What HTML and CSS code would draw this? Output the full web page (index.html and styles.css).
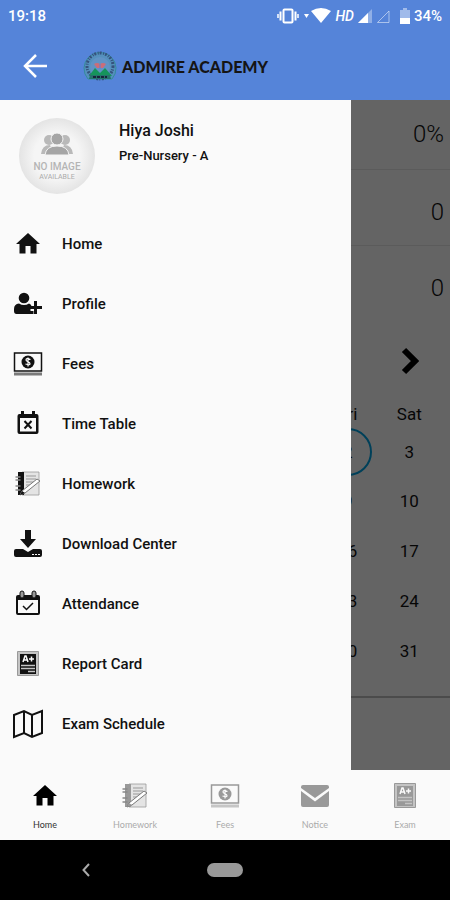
FILE: index.html
```
<!DOCTYPE html>
<html lang="en">
  <head>
    <meta charset="utf-8" />
    <meta name="viewport" content="width=device-width, initial-scale=1" />
    <title>Admire Academy</title>
    <link rel="stylesheet" href="styles.css">
  </head>
  <body>
    <!-- shared icons -->
    <svg class="sprite" aria-hidden="true">
      <symbol id="icon-home" viewBox="0 0 30 30">
        <path d="M15 4l12 11h-3.500v9.500h-6V17h-5v7.500h-6V15H3z" />
      </symbol>
      <symbol id="icon-profile" viewBox="0 0 30 30">
        <circle cx="11" cy="9" r="5.300" />
        <path d="M6 14.500q5 3 10 0 2 .5 2.500 2.500h-1v5h3v3H3.500Q1 25 1 22v-2q0-5 5-5.500z" />
        <path d="M21 12h3v5h5v3h-5v5h-3v-5h-5v-3h5z" />
      </symbol>
      <symbol id="icon-fees" viewBox="0 0 30 30">
        <path d="M1.500 4h27v18h-27z" fill="none" stroke="currentColor" stroke-width="1.500" />
        <circle cx="15" cy="13" r="6.500" />
        <path d="M17.500 10.500q-4.500-2-4.500.5 0 1 2 1.700t2 2q0 2-4.500.3M15 8.500v9" fill="none" stroke="#fafafa" stroke-width="1.200" />
        <path d="M1 23.500h28v3H1z" opacity=".55" />
      </symbol>
      <symbol id="icon-timetable" viewBox="0 0 30 30">
        <path d="M6.500 5H8V2h3v3h8V2h3v3h1.500q2 0 2 2v16q0 2-2 2h-17q-2 0-2-2V7q0-2 2-2zM7 9v13.500h16V9z" fill-rule="evenodd" />
        <path d="M11.500 12l7 7.500M18.500 12l-7 7.500" fill="none" stroke="currentColor" stroke-width="2" />
      </symbol>
      <symbol id="icon-homework" viewBox="0 0 30 30">
        <path d="M9 3h17v23H9z" fill="#e4e4e4" stroke="#999" stroke-width=".8" />
        <path d="M5 3h6v23H5z" />
        <path d="M2.500 8h5M2.500 11h5M2.500 17h5M2.500 21h5" stroke="#888" stroke-width="1.500" />
        <path d="M13 7h10M13 10h10M13 13h8M13 16h4" stroke="#999" />
        <path d="M9 22L24 10l3 2-15 12-5 2z" fill="#fff" stroke="#777" stroke-width="1" />
        <path d="M7 26l2-4 3 2z" />
      </symbol>
      <symbol id="icon-download" viewBox="0 0 30 30">
        <path d="M12 1h6v9h5l-8 9-8-9h5z" />
        <path d="M3 20h7l5 3 5-3h7q2 0 2 2v4q0 2-2 2H3q-2 0-2-2v-4q0-2 2-2z" />
        <path d="M19 25.500h2M22 25.500h2M25 25.500h2" stroke="#fafafa" />
      </symbol>
      <symbol id="icon-attendance" viewBox="0 0 30 30">
        <path d="M5 6h20q2 0 2 2v16q0 2-2 2H5q-2 0-2-2V8q0-2 2-2zm0 5v13h20V11z" fill-rule="evenodd" />
        <path d="M7 4q0-2 2-2t2 2v3q0 2-2 2t-2-2zM19 4q0-2 2-2t2 2v3q0 2-2 2t-2-2z" fill="#999" stroke="currentColor" />
        <path d="M10 17l3.500 3.500L20 14" fill="none" stroke="currentColor" stroke-width="1.500" />
      </symbol>
      <symbol id="icon-report" viewBox="0 0 30 30">
        <path d="M4.500 2.500h21v24h-21z" fill="#c4c4c4" stroke="#999" />
        <path d="M7 5h16v20H7z" />
        <path d="M10 13l2-6h1l2 6M11 11h3M16 10h5M18.500 7.500v5" fill="none" stroke="#fafafa" stroke-width="1.500" />
        <path d="M8 16.500h14M8 19.500h14M15 22.500h7" stroke="#c4c4c4" stroke-width="1.500" />
      </symbol>
      <symbol id="icon-map" viewBox="0 0 30 30">
        <path d="M1 6l10-4 8 4 10-4v22l-10 4-8-4-10 4zM11 2v22M19 6v22" fill="none" stroke="currentColor" stroke-width="2" />
      </symbol>
      <symbol id="icon-mail" viewBox="0 0 30 30">
        <path d="M3 4h24q2 0 2 2v1L15 17 1 7V6q0-2 2-2z" />
        <path d="M1 10l14 10.500L29 10v14q0 2-2 2H3q-2 0-2-2z" />
      </symbol>
    </svg>

    <header class="app-header">
      <div class="status-bar">
        <span>19:18</span>
        <div class="status-icons">
          <svg width="22" height="16" viewBox="0 0 22 16" fill="none" stroke="#fff" aria-hidden="true">
            <rect x="6.500" y="1.500" width="9" height="13" rx="1" stroke-width="2" />
            <path d="M3.500 3.500v9M18.500 3.500v9" stroke-width="2" />
            <path d="M1 6v4M21 6v4" stroke-width="1.500" />
          </svg>
          <svg width="28" height="16" viewBox="0 0 28 16" fill="#fff" aria-hidden="true">
            <path d="M1 6h5l-2.500 4zM8 3q10-6 20 0L18 15z" />
          </svg>
          <span class="hd">HD</span>
          <svg width="14" height="16" viewBox="0 0 14 16" aria-hidden="true">
            <path d="M0 15L14 1v14z" fill="#fff" opacity=".35" />
            <path d="M0 15L10 5v10z" fill="#fff" />
          </svg>
          <svg width="14" height="16" viewBox="0 0 14 16" aria-hidden="true">
            <path d="M1.500 14.500L13 3v11.500z" fill="none" stroke="#fff" opacity=".5" />
          </svg>
          <svg class="battery" width="10" height="16" viewBox="0 0 10 16" fill="#fff" aria-hidden="true">
            <path d="M3 0h4v2h3v9H0V2h3z" opacity=".45" />
            <path d="M0 10h10v6H0z" />
          </svg>
          <span>34%</span>
        </div>
      </div>
      <div class="toolbar">
        <button class="icon-button" type="button" aria-label="Back">
          <svg width="24" height="24" viewBox="0 0 24 24" fill="none" stroke="#fff" stroke-width="2.500" aria-hidden="true">
            <path d="M24 12H2M13 1L2 12l11 11" />
          </svg>
        </button>
        <svg class="logo" width="34" height="32" viewBox="0 0 34 32" aria-hidden="true">
          <path d="M5 29a16 16 0 1 1 24 0z" fill="#5590bd" stroke="#348b9d" />
          <circle cx="17" cy="16" r="13" fill="none" stroke="#35527c" stroke-width="3" stroke-dasharray="2 1.500 1 1" />
          <circle cx="17" cy="17" r="10" fill="#6193c5" />
          <path d="M6 26l6-8 5 5 5-5 7 8z" fill="#15945b" />
          <path d="M11 14q3-2 6 0 3-2 6 0l-3 4h-6z" fill="#cb6d79" />
          <path d="M17 14v5" stroke="#5584d9" />
          <path d="M7 25h20l1 4H6z" fill="#24736b" />
          <path d="M10 27h14" stroke="#17243b" stroke-width="2" stroke-dasharray="3 1" />
        </svg>
        <h1 class="brand">ADMIRE ACADEMY</h1>
      </div>
    </header>

    <div class="stage">
      <main class="dashboard">
        <ul class="stats">
          <li>0%</li>
          <li>0</li>
          <li>0</li>
        </ul>
        <div class="month-bar">
          <button class="month-next" type="button" aria-label="Next month">
            <svg width="18" height="28" viewBox="0 0 18 28" fill="none" stroke="#000" stroke-width="6" aria-hidden="true">
              <path d="M3 3l11 11L3 25" />
            </svg>
          </button>
        </div>
        <table class="calendar">
          <colgroup>
            <col span="7" />
          </colgroup>
          <thead>
            <tr><td colspan="5"></td><th>Fri</th><th>Sat</th></tr>
          </thead>
          <tbody>
            <tr><td colspan="5"></td><td><span class="today">2</span></td><td>3</td></tr>
            <tr><td colspan="5"></td><td>9</td><td>10</td></tr>
            <tr><td colspan="5"></td><td>16</td><td>17</td></tr>
            <tr><td colspan="5"></td><td>23</td><td>24</td></tr>
            <tr><td colspan="5"></td><td>30</td><td>31</td></tr>
          </tbody>
        </table>
      </main>
      <div class="scrim"></div>

      <aside class="drawer">
        <div class="profile">
          <svg class="avatar" width="76" height="76" viewBox="0 0 76 76" role="img" aria-label="No image available">
            <defs>
              <radialGradient id="avatar-fill">
                <stop offset="0.600" stop-color="#f5f5f5" />
                <stop offset="1" stop-color="#e4e4e4" />
              </radialGradient>
            </defs>
            <circle cx="38" cy="38" r="38" fill="url(#avatar-fill)" />
            <g fill="#b9b9b9">
              <circle cx="30" cy="22" r="5" />
              <circle cx="46" cy="22" r="5" />
              <path d="M22 36q1-9 9-9l4 9zM54 36q-1-9-9-9l-4 9z" />
            </g>
            <g fill="#a5a5a5" stroke="#f3f3f3">
              <circle cx="38" cy="21" r="6" />
              <path d="M26 37q1-9 12-9t12 9z" />
            </g>
            <text x="38" y="52" text-anchor="middle" class="avatar-title">NO IMAGE</text>
            <text x="38" y="61" text-anchor="middle" class="avatar-note">AVAILABLE</text>
          </svg>
          <div>
            <h2 class="student-name">Hiya Joshi</h2>
            <p class="student-class">Pre-Nursery - A</p>
          </div>
        </div>
        <nav class="menu" aria-label="Main menu">
          <a href="#home"><svg class="icon"><use href="#icon-home" /></svg>Home</a>
          <a href="#profile"><svg class="icon"><use href="#icon-profile" /></svg>Profile</a>
          <a href="#fees"><svg class="icon"><use href="#icon-fees" /></svg>Fees</a>
          <a href="#timetable"><svg class="icon"><use href="#icon-timetable" /></svg>Time Table</a>
          <a href="#homework"><svg class="icon"><use href="#icon-homework" /></svg>Homework</a>
          <a href="#downloads"><svg class="icon"><use href="#icon-download" /></svg>Download Center</a>
          <a href="#attendance"><svg class="icon"><use href="#icon-attendance" /></svg>Attendance</a>
          <a href="#report"><svg class="icon"><use href="#icon-report" /></svg>Report Card</a>
          <a href="#exams"><svg class="icon"><use href="#icon-map" /></svg>Exam Schedule</a>
        </nav>
      </aside>
    </div>

    <nav class="tabs" aria-label="Shortcuts">
      <a class="active" href="#home"><svg class="icon"><use href="#icon-home" /></svg>Home</a>
      <a href="#homework"><svg class="icon"><use href="#icon-homework" /></svg>Homework</a>
      <a href="#fees"><svg class="icon"><use href="#icon-fees" /></svg>Fees</a>
      <a href="#notice"><svg class="icon"><use href="#icon-mail" /></svg>Notice</a>
      <a href="#exam"><svg class="icon"><use href="#icon-report" /></svg>Exam</a>
    </nav>

    <div class="system-nav">
      <button class="system-back" type="button" aria-label="System back">
        <svg width="8" height="14" viewBox="0 0 8 14" fill="none" stroke="#aaa" stroke-width="2" aria-hidden="true">
          <path d="M7 1L1.500 7 7 13" />
        </svg>
      </button>
      <button class="pill" type="button" aria-label="System home"></button>
    </div>
  </body>
</html>
```
FILE: styles.css
```
* {
  box-sizing: border-box;
}
body {
  display: flex;
  flex-direction: column;
  min-height: 100vh;
  margin: 0;
  font-family: Roboto, Arial, sans-serif;
  font-size: 15px;
  color: #111;
  background-color: #fafafa;
}
a {
  color: inherit;
  text-decoration: none;
}
button {
  display: flex;
  align-items: center;
  justify-content: center;
  padding: 0;
  border: none;
  background: none;
  cursor: pointer;
}
.sprite {
  position: absolute;
  width: 0;
  height: 0;
}
.icon {
  width: 30px;
  height: 30px;
  fill: currentColor;
}

/* Header */
.app-header {
  color: #fff;
  background-color: #5584d9;
}
.status-bar {
  display: flex;
  align-items: center;
  justify-content: space-between;
  height: 32px;
  padding: 0 8px;
  font-weight: 500;
}
.status-icons {
  display: flex;
  align-items: center;
  gap: 4px;
}
.status-icons .battery {
  margin-left: 6px;
}
.hd {
  font-style: italic;
  font-size: 14px;
}
.toolbar {
  display: flex;
  align-items: center;
  height: 68px;
  padding: 0 20px;
}
.icon-button {
  width: 30px;
  height: 32px;
}
.logo {
  margin-left: 33px;
}
.brand {
  margin: 0 0 0 5px;
  font-family: Lato, sans-serif;
  font-size: 16px;
  font-weight: 900;
  color: #151515;
}

/* Dashboard under the drawer */
.stage {
  position: relative;
  flex: 1;
  overflow: hidden;
}
.stats {
  margin: 0;
  padding: 0;
  list-style: none;
}
.stats li {
  height: 76px;
  padding: 8px 6px 0;
  border-bottom: 1px solid #e4e4e4;
  font-size: 24px;
  font-weight: 300;
  line-height: 68px;
  text-align: right;
}
.stats li:first-child {
  height: 70px;
  padding-top: 0;
}
.stats li:last-child {
  border: none;
}
.month-bar {
  display: flex;
  justify-content: flex-end;
  height: 78px;
  padding: 8px 10px;
}
.month-next {
  width: 60px;
}
.calendar {
  width: 100%;
  padding: 0 10px 20px;
  border-spacing: 0;
  border-bottom: 2px solid #bbb;
  table-layout: fixed;
  font-size: 17px;
  text-align: center;
}
.calendar th {
  height: 28px;
  padding: 0;
  font-size: 17px;
  font-weight: 400;
}
.calendar td {
  padding: 0;
}
.calendar tbody td {
  height: 50px;
}
.calendar tbody tr:first-child td {
  height: 48px;
}
.today {
  display: block;
  width: 48px;
  height: 48px;
  margin: 0 auto;
  border: 2px solid #00a0df;
  border-radius: 50%;
  line-height: 44px;
}
.scrim {
  position: absolute;
  inset: 0;
  background-color: rgba(0, 0, 0, 0.6);
}

/* Drawer */
.drawer {
  position: absolute;
  top: 0;
  bottom: 0;
  left: 0;
  width: 78%;
  background-color: #fafafa;
}
.profile {
  display: flex;
  gap: 24px;
  height: 114px;
  padding: 18px 19px;
}
.student-name {
  margin: 3px 0 6px;
  font-size: 16px;
  font-weight: 500;
  line-height: 20px;
}
.student-class {
  margin: 0;
  font-size: 13px;
  font-weight: 500;
  line-height: 18px;
}
.avatar-title {
  font-size: 10px;
  font-weight: 500;
  fill: #b4b4b4;
}
.avatar-note {
  font-size: 7px;
  fill: #aaa;
}
.menu a {
  display: flex;
  align-items: center;
  gap: 19px;
  height: 60px;
  padding: 0 13px;
  font-weight: 500;
}

/* Bottom tabs */
.tabs {
  display: flex;
  height: 70px;
  background-color: #fafafa;
}
.tabs a {
  display: flex;
  flex: 1;
  flex-direction: column;
  align-items: center;
  gap: 8px;
  padding-top: 11px;
  font-family: Lato, sans-serif;
  font-size: 9px;
  line-height: 12px;
  color: #aaa;
}
.tabs a .icon {
  color: #999;
}
.tabs a.active {
  color: #333;
}
.tabs a.active .icon {
  color: #000;
}

/* Phone buttons */
.system-nav {
  display: grid;
  grid-template-columns: 1fr 36px 1fr;
  align-items: center;
  height: 60px;
  background-color: #000;
}
.system-nav .system-back {
  width: 32px;
  height: 32px;
  margin-left: 34%;
}
.system-nav .pill {
  height: 14px;
  border-radius: 7px;
  background-color: #999;
}
```
